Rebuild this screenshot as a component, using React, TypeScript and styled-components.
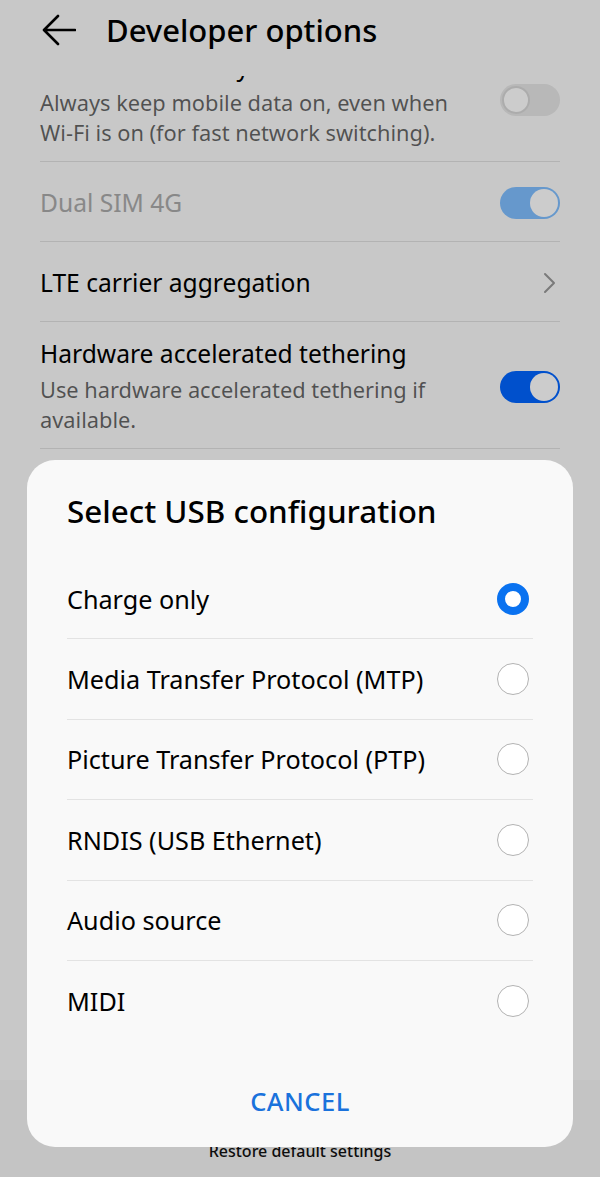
import React from "react";
import styled, { createGlobalStyle } from "styled-components";

const Global = createGlobalStyle`
  html, body { margin: 0; padding: 0; }
  body { font-family: "Noto Sans", Roboto, "Liberation Sans", sans-serif; background: #fafafa; }
  * { box-sizing: border-box; }
`;

const Page = styled.div`
  position: relative;
  width: 600px;
  height: 1177px;
  display: flex;
  flex-direction: column;
  background: #fafafa;
  overflow: hidden;
`;

const Header = styled.header`
  height: 76px;
  flex: none;
  display: flex;
  align-items: center;
  gap: 30px;
  padding: 0 0 16px 42px;
  background: #fafafa;
  position: relative;
  z-index: 1;
`;

const Title = styled.h1`
  margin: 0;
  font-size: 31px;
  line-height: 36px;
  font-weight: 500;
  color: #000;
`;

const ListViewport = styled.div`
  flex: 1;
  overflow: hidden;
  padding: 0 40px;
`;

const ListInner = styled.div<{ $scroll: number }>`
  margin-top: ${(p) => -p.$scroll}px;
`;

const Row = styled.div`
  display: flex;
  align-items: center;
  gap: 20px;
  min-height: 80px;
  padding: 16px 0 13px;
  border-bottom: 1px solid #e0e0e0;
`;

const RowText = styled.div`
  flex: 1;
  min-width: 0;
`;

const RowTitle = styled.div<{ $disabled?: boolean }>`
  font-size: 24.6px;
  line-height: 32px;
  color: ${(p) => (p.$disabled ? "#ababab" : "#000")};
`;

const RowSub = styled.div`
  font-size: 21.8px;
  line-height: 30px;
  color: rgba(0, 0, 0, 0.6);
  margin-top: 5px;
`;

const NoWrap = styled.span`
  white-space: nowrap;
`;

const Track = styled.div<{ $on?: boolean; $disabled?: boolean }>`
  flex: none;
  width: 60px;
  height: 32px;
  border-radius: 16px;
  padding: 2px;
  display: flex;
  justify-content: ${(p) => (p.$on ? "flex-end" : "flex-start")};
  background: ${(p) =>
    p.$on ? (p.$disabled ? "#80bfff" : "#0064ff") : "#e6e6e6"};
`;

const Knob = styled.div<{ $on?: boolean }>`
  width: 28px;
  height: 28px;
  border-radius: 50%;
  background: #fff;
  border: ${(p) => (p.$on ? "none" : "2px solid #d8d8d8")};
`;

const Footer = styled.div`
  height: 97px;
  flex: none;
  background: #f5f5f5;
  display: flex;
  justify-content: center;
  padding-top: 59px;
  font-size: 16px;
  line-height: 24px;
  font-weight: 500;
  color: #111;
`;

const Scrim = styled.div`
  position: absolute;
  inset: 0;
  background: rgba(0, 0, 0, 0.2);
  z-index: 2;
`;

const Dialog = styled.div`
  position: absolute;
  left: 27px;
  right: 27px;
  bottom: 30px;
  height: 687px;
  background: #f9f9f9;
  border-radius: 28px;
  z-index: 3;
  padding: 33px 40px 0;
  display: flex;
  flex-direction: column;
`;

const DialogTitle = styled.h2`
  margin: 0 0 30px;
  font-size: 31.4px;
  line-height: 36px;
  font-weight: 500;
  color: #000;
`;

const Option = styled.label<{ $last?: boolean }>`
  display: flex;
  align-items: center;
  justify-content: space-between;
  height: 80.4px;
  padding-right: 4px;
  border-bottom: ${(p) => (p.$last ? "none" : "1px solid #e3e3e3")};
  font-size: 25.2px;
  color: #000;
`;

const Radio = styled.span<{ $checked?: boolean }>`
  width: 32px;
  height: 32px;
  border-radius: 50%;
  flex: none;
  border: ${(p) => (p.$checked ? "8px solid #0a72f0" : "1.5px solid #b3b3b3")};
  background: #fff;
`;

const Actions = styled.div`
  display: flex;
  justify-content: center;
  padding-top: 44px;
`;

const CancelButton = styled.button`
  border: none;
  background: none;
  font-family: inherit;
  font-size: 25.5px;
  line-height: 32px;
  font-weight: 500;
  letter-spacing: 0.5px;
  color: #1a72dc;
  padding: 0;
`;

const BackArrow = () => (
  <svg width="34" height="34" viewBox="0 0 34 34" fill="none">
    <path
      d="M33 17H3M16 3L2 17l14 14"
      stroke="#000"
      strokeWidth="2.6"
      strokeLinecap="round"
      strokeLinejoin="round"
    />
  </svg>
);

const Chevron = () => (
  <svg width="14" height="22" viewBox="0 0 14 22" fill="none" style={{ marginRight: 4 }}>
    <path d="M3 2l9 9-9 9" stroke="#999" strokeWidth="2" strokeLinecap="round" strokeLinejoin="round" />
  </svg>
);

const Toggle = ({ on, disabled }: { on?: boolean; disabled?: boolean }) => (
  <Track $on={on} $disabled={disabled}>
    <Knob $on={on} />
  </Track>
);

const options = [
  "Charge only",
  "Media Transfer Protocol (MTP)",
  "Picture Transfer Protocol (PTP)",
  "RNDIS (USB Ethernet)",
  "Audio source",
  "MIDI",
];

export default function App() {
  return (
    <>
      <Global />
      <Page>
        <Header>
          <BackArrow />
          <Title>Developer options</Title>
        </Header>
        <ListViewport>
          <ListInner $scroll={41}>
            <Row>
              <RowText>
                <RowTitle>Mobile data always active</RowTitle>
                <RowSub>
                  Always keep mobile data on, even when <NoWrap>Wi-Fi</NoWrap> is on (for fast network switching).
                </RowSub>
              </RowText>
              <Toggle />
            </Row>
            <Row>
              <RowText>
                <RowTitle $disabled>Dual SIM 4G</RowTitle>
              </RowText>
              <Toggle on disabled />
            </Row>
            <Row>
              <RowText>
                <RowTitle>LTE carrier aggregation</RowTitle>
              </RowText>
              <Chevron />
            </Row>
            <Row>
              <RowText>
                <RowTitle>Hardware accelerated tethering</RowTitle>
                <RowSub>Use hardware accelerated tethering if available.</RowSub>
              </RowText>
              <Toggle on />
            </Row>
          </ListInner>
        </ListViewport>
        <Footer>Restore default settings</Footer>
        <Scrim />
        <Dialog role="dialog">
          <DialogTitle>Select USB configuration</DialogTitle>
          {options.map((o, i) => (
            <Option key={o} $last={i === options.length - 1}>
              {o}
              <Radio $checked={i === 0} />
            </Option>
          ))}
          <Actions>
            <CancelButton>CANCEL</CancelButton>
          </Actions>
        </Dialog>
      </Page>
    </>
  );
}
